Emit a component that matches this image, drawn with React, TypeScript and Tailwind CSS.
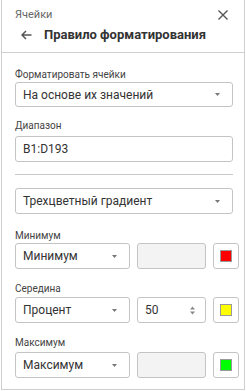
import React from "react";

const Caret = () => (
  <svg width="5" height="3" viewBox="0 0 5 3" className="shrink-0">
    <path d="M0 0 L5 0 L2.5 3 Z" fill="#777" />
  </svg>
);

const Select = ({ text, className }: { text: string; className?: string }) => (
  <div
    className={
      "flex shrink-0 items-center justify-between rounded-[3px] border border-[#c4c4c4] bg-white pl-[7px] pr-[12px] text-[12px] text-[#333] " +
      (className || "")
    }
  >
    <span>{text}</span>
    <Caret />
  </div>
);

const Label = ({ text, className }: { text: string; className?: string }) => (
  <div className={"h-[12px] text-[10px] leading-[12px] text-[#444] " + (className || "")}>{text}</div>
);

const ColorBtn = ({ color }: { color: string }) => (
  <div className="flex h-[26px] w-[26px] shrink-0 items-center justify-center rounded-[3px] border border-[#c4c4c4] bg-white">
    <div className="h-[12px] w-[12px] border border-[#999]" style={{ background: color }} />
  </div>
);

export default function App() {
  return (
    <div
      className="ml-px h-[390px] w-[244px] border-x border-b border-[#cfcfcf] bg-white"
      style={{ fontFamily: "Roboto, 'Noto Sans', sans-serif" }}
    >
      <div className="h-[53px] border-b border-[#cfcfcf] px-[13px] pt-[8px]">
        <div className="flex h-[14px] items-center justify-between">
          <span className="text-[11px] leading-[14px] text-[#666]">Ячейки</span>
          <svg width="10" height="10" viewBox="0 0 10 10" className="mr-[3px]">
            <path d="M0.5 0.5 L9.5 9.5 M9.5 0.5 L0.5 9.5" stroke="#555" strokeWidth="1.4" />
          </svg>
        </div>
        <div className="mt-[5px] flex h-[16px] items-center">
          <svg width="11" height="10" viewBox="0 0 11 10" className="ml-[6px]">
            <path d="M10.5 5 H1.5 M5 1 L1 5 L5 9" stroke="#555" strokeWidth="1.5" fill="none" />
          </svg>
          <span className="ml-[12px] text-[13px] font-bold leading-[16px] text-[#333]">
            Правило форматирования
          </span>
        </div>
      </div>
      <div className="px-[13px]">
        <Label text="Форматировать ячейки" className="mt-[16px]" />
        <Select text="На основе их значений" className="mt-[1px] h-[25px] w-[218px]" />
        <Label text="Диапазон" className="mt-[13px]" />
        <div className="mt-[4px] flex h-[26px] w-[218px] items-center rounded-[3px] border border-[#c4c4c4] bg-white pl-[7px] text-[12px] text-[#333]">
          B1:D193
        </div>
        <div className="mt-[12px] h-px w-[218px] bg-[#c8c8c8]" />
        <Select text="Трехцветный градиент" className="mt-[13px] h-[26px] w-[218px]" />
        <Label text="Минимум" className="mt-[16px]" />
        <div className="mt-[1px] flex h-[26px] items-center gap-[7px]">
          <Select text="Минимум" className="h-[26px] w-[115px]" />
          <div className="h-[26px] w-[69px] shrink-0 rounded-[3px] border border-[#c4c4c4] bg-[#f3f3f3]" />
          <ColorBtn color="#ff0000" />
        </div>
        <Label text="Середина" className="mt-[14px]" />
        <div className="mt-[2px] flex h-[26px] items-center gap-[7px]">
          <Select text="Процент" className="h-[26px] w-[115px]" />
          <div className="flex h-[26px] w-[69px] shrink-0 items-center justify-between rounded-[3px] border border-[#c4c4c4] bg-white pl-[7px] pr-[10px] text-[12px] text-[#333]">
            <span>50</span>
            <svg width="5" height="9" viewBox="0 0 5 9">
              <path d="M0 3.5 L2.5 0.5 L5 3.5 Z M0 5.5 L2.5 8.5 L5 5.5 Z" fill="#888" />
            </svg>
          </div>
          <ColorBtn color="#ffff00" />
        </div>
        <Label text="Максимум" className="mt-[14px]" />
        <div className="mt-[3px] flex h-[26px] items-center gap-[7px]">
          <Select text="Максимум" className="h-[26px] w-[115px]" />
          <div className="h-[26px] w-[69px] shrink-0 rounded-[3px] border border-[#c4c4c4] bg-[#f3f3f3]" />
          <ColorBtn color="#00ff00" />
        </div>
      </div>
    </div>
  );
}
